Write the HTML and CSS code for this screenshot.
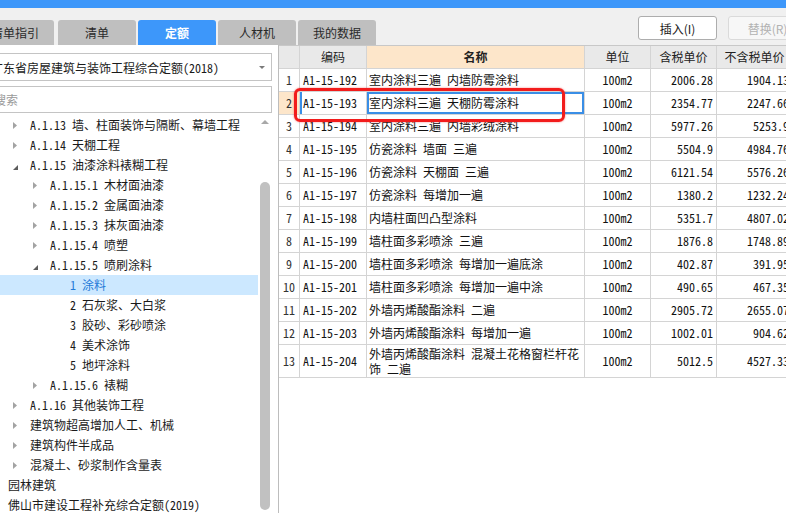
FILE: index.html
```html
<!DOCTYPE html>
<html lang="zh-CN">
<head>
<meta charset="utf-8">
<title>定额</title>
<link rel="stylesheet" href="styles.css">
</head>
<body>
<div class="topbar"></div>
<div class="toolbar">
  <div class="tabs">
    <div class="tab first">清单指引</div>
    <div class="tab">清单</div>
    <div class="tab active">定额</div>
    <div class="tab">人材机</div>
    <div class="tab">我的数据</div>
  </div>
  <div class="actions">
    <button class="btn">插入(I)</button>
    <button class="btn disabled">替换(R)</button>
  </div>
</div>
<div class="main">
  <aside class="side">
    <div class="select"><span>广东省房屋建筑与装饰工程综合定额(2018)</span><span class="caret"></span></div>
    <div class="search">搜索</div>
    <div class="treewrap">
      <ul class="tree">
        <li class="l1"><svg class="arr" width="4" height="7" viewBox="0 0 4 7"><path d="M0 0L4 3.5L0 7Z"/></svg>A.1.13 墙、柱面装饰与隔断、幕墙工程</li>
        <li class="l1"><svg class="arr" width="4" height="7" viewBox="0 0 4 7"><path d="M0 0L4 3.5L0 7Z"/></svg>A.1.14 天棚工程</li>
        <li class="l1"><svg class="arr open" width="5" height="5" viewBox="0 0 5 5"><path d="M5 0L5 5L0 5Z"/></svg>A.1.15 油漆涂料裱糊工程</li>
        <li class="l2"><svg class="arr" width="4" height="7" viewBox="0 0 4 7"><path d="M0 0L4 3.5L0 7Z"/></svg>A.1.15.1 木材面油漆</li>
        <li class="l2"><svg class="arr" width="4" height="7" viewBox="0 0 4 7"><path d="M0 0L4 3.5L0 7Z"/></svg>A.1.15.2 金属面油漆</li>
        <li class="l2"><svg class="arr" width="4" height="7" viewBox="0 0 4 7"><path d="M0 0L4 3.5L0 7Z"/></svg>A.1.15.3 抹灰面油漆</li>
        <li class="l2"><svg class="arr" width="4" height="7" viewBox="0 0 4 7"><path d="M0 0L4 3.5L0 7Z"/></svg>A.1.15.4 喷塑</li>
        <li class="l2"><svg class="arr open" width="5" height="5" viewBox="0 0 5 5"><path d="M5 0L5 5L0 5Z"/></svg>A.1.15.5 喷刷涂料</li>
        <li class="l3 sel">1 涂料</li>
        <li class="l3">2 石灰浆、大白浆</li>
        <li class="l3">3 胶砂、彩砂喷涂</li>
        <li class="l3">4 美术涂饰</li>
        <li class="l3">5 地坪涂料</li>
        <li class="l2"><svg class="arr" width="4" height="7" viewBox="0 0 4 7"><path d="M0 0L4 3.5L0 7Z"/></svg>A.1.15.6 裱糊</li>
        <li class="l1"><svg class="arr" width="4" height="7" viewBox="0 0 4 7"><path d="M0 0L4 3.5L0 7Z"/></svg>A.1.16 其他装饰工程</li>
        <li class="l1"><svg class="arr" width="4" height="7" viewBox="0 0 4 7"><path d="M0 0L4 3.5L0 7Z"/></svg>建筑物超高增加人工、机械</li>
        <li class="l1"><svg class="arr" width="4" height="7" viewBox="0 0 4 7"><path d="M0 0L4 3.5L0 7Z"/></svg>建筑构件半成品</li>
        <li class="l1"><svg class="arr" width="4" height="7" viewBox="0 0 4 7"><path d="M0 0L4 3.5L0 7Z"/></svg>混凝土、砂浆制作含量表</li>
        <li class="l0">园林建筑</li>
        <li class="l0">佛山市建设工程补充综合定额(2019)</li>
      </ul>
      <div class="vscroll"><span class="up"></span><span class="thumb"></span></div>
    </div>
  </aside>
  <section class="grid">
    <table class="dt">
      <colgroup><col class="c-no"><col class="c-code"><col class="c-name"><col class="c-unit"><col class="c-p1"><col class="c-p2"></colgroup>
      <thead>
        <tr><th></th><th>编码</th><th class="hl">名称</th><th>单位</th><th>含税单价</th><th>不含税单价</th></tr>
      </thead>
      <tbody>
        <tr><td class="no">1</td><td>A1-15-192</td><td class="name">室内涂料三遍 内墙防霉涂料</td><td class="unit">100m2</td><td class="num">2006.28</td><td class="num">1904.13</td></tr>
        <tr class="cur"><td class="no">2</td><td class="code-cur">A1-15-193</td><td class="name focus">室内涂料三遍 天棚防霉涂料</td><td class="unit">100m2</td><td class="num">2354.77</td><td class="num">2247.66</td></tr>
        <tr><td class="no">3</td><td>A1-15-194</td><td class="name">室内涂料三遍 内墙彩绒涂料</td><td class="unit">100m2</td><td class="num">5977.26</td><td class="num">5253.9</td></tr>
        <tr><td class="no">4</td><td>A1-15-195</td><td class="name">仿瓷涂料 墙面 三遍</td><td class="unit">100m2</td><td class="num">5504.9</td><td class="num">4984.76</td></tr>
        <tr><td class="no">5</td><td>A1-15-196</td><td class="name">仿瓷涂料 天棚面 三遍</td><td class="unit">100m2</td><td class="num">6121.54</td><td class="num">5576.26</td></tr>
        <tr><td class="no">6</td><td>A1-15-197</td><td class="name">仿瓷涂料 每增加一遍</td><td class="unit">100m2</td><td class="num">1380.2</td><td class="num">1232.24</td></tr>
        <tr><td class="no">7</td><td>A1-15-198</td><td class="name">内墙柱面凹凸型涂料</td><td class="unit">100m2</td><td class="num">5351.7</td><td class="num">4807.02</td></tr>
        <tr><td class="no">8</td><td>A1-15-199</td><td class="name">墙柱面多彩喷涂 三遍</td><td class="unit">100m2</td><td class="num">1876.8</td><td class="num">1748.89</td></tr>
        <tr><td class="no">9</td><td>A1-15-200</td><td class="name">墙柱面多彩喷涂 每增加一遍底涂</td><td class="unit">100m2</td><td class="num">402.87</td><td class="num">391.95</td></tr>
        <tr><td class="no">10</td><td>A1-15-201</td><td class="name">墙柱面多彩喷涂 每增加一遍中涂</td><td class="unit">100m2</td><td class="num">490.65</td><td class="num">467.35</td></tr>
        <tr><td class="no">11</td><td>A1-15-202</td><td class="name">外墙丙烯酸酯涂料 二遍</td><td class="unit">100m2</td><td class="num">2905.72</td><td class="num">2655.07</td></tr>
        <tr><td class="no">12</td><td>A1-15-203</td><td class="name">外墙丙烯酸酯涂料 每增加一遍</td><td class="unit">100m2</td><td class="num">1002.01</td><td class="num">904.62</td></tr>
        <tr class="tall"><td class="no">13</td><td>A1-15-204</td><td class="name wrap">外墙丙烯酸酯涂料 混凝土花格窗栏杆花饰 二遍</td><td class="unit">100m2</td><td class="num">5012.5</td><td class="num">4527.33</td></tr>
      </tbody>
    </table>
    <div class="redbox"></div>
  </section>
</div>
</body>
</html>
```

FILE: styles.css
```css
html, body {
  margin: 0;
  padding: 0;
}
body {
  width: 786px;
  height: 513px;
  overflow: hidden;
  background: #ffffff;
  font-family: "Noto Sans Mono CJK SC", "Noto Sans CJK SC", sans-serif;
  font-size: 12px;
  color: #1a1a1a;
}

.topbar {
  height: 8px;
  background: #3d97fa;
}

.toolbar {
  height: 37px;
  background: #f0f0f0;
  display: flex;
  justify-content: space-between;
}
.tabs {
  display: flex;
  align-items: flex-end;
  gap: 2px;
  margin-left: -24px;
}
.tab {
  width: 78px;
  height: 25px;
  background: #bfbfbf;
  border-radius: 3px 3px 0 0;
  display: flex;
  align-items: center;
  justify-content: center;
  font-family: "Noto Sans CJK SC", sans-serif;
  font-size: 12px;
  color: #2a2a2a;
}
.tab.first {
  margin-right: 2px;
}
.tab.active {
  background: #3d97fa;
  color: #ffffff;
  font-weight: bold;
}
.actions {
  display: flex;
  align-items: flex-start;
  gap: 11px;
  margin-top: 8px;
  margin-right: -21px;
}
.btn {
  width: 79px;
  height: 24px;
  box-sizing: border-box;
  background: #ffffff;
  border: 1px solid #adadad;
  border-radius: 3px;
  font-family: "Noto Sans CJK SC", sans-serif;
  font-size: 12px;
  color: #1a1a1a;
  padding: 0;
}
.btn.disabled {
  background: #f7f7f7;
  border-color: #dadada;
  color: #b2b2b2;
}

.main {
  display: flex;
  height: 468px;
}

.side {
  width: 278px;
  flex: none;
  border-right: 1px solid #bdbdbd;
  background: #ffffff;
  display: flex;
  flex-direction: column;
  overflow: hidden;
}
.select {
  margin: 8px 6px 0 -14px;
  height: 28px;
  box-sizing: border-box;
  border: 1px solid #c4c4c4;
  padding: 0 6px 0 4px;
  display: flex;
  align-items: center;
  justify-content: space-between;
  white-space: nowrap;
  color: #1a1a1a;
}
.caret {
  width: 0;
  height: 0;
  border-left: 3px solid transparent;
  border-right: 3px solid transparent;
  border-top: 3px solid #7a7a7a;
  margin-right: 0;
}
.search {
  margin: 5px 6px 0 -14px;
  height: 27px;
  box-sizing: border-box;
  border: 1px solid #c4c4c4;
  padding-left: 7px;
  display: flex;
  align-items: center;
  color: #9a9a9a;
}
.treewrap {
  margin-top: 2px;
  flex: 1;
  display: flex;
  overflow: hidden;
}
.tree {
  list-style: none;
  margin: 0;
  padding: 0;
  width: 258px;
  flex: none;
}
.tree li {
  height: 20px;
  line-height: 20px;
  display: flex;
  align-items: center;
  white-space: nowrap;
  color: #1a1a1a;
}
.tree .arr {
  flex: none;
  fill: #a3a3a3;
  margin-right: 13px;
}
.tree .arr.open {
  fill: #5c5c5c;
  margin-right: 12px;
  margin-top: 4px;
}
.tree .l0 { padding-left: 8px; }
.tree .l1 { padding-left: 13px; }
.tree .l2 { padding-left: 33px; }
.tree .l3 { padding-left: 70px; }
.tree .sel {
  background: #cce8ff;
  color: #1f7ad8;
}
.vscroll {
  width: 14px;
  flex: none;
  display: flex;
  flex-direction: column;
  align-items: center;
  padding: 5px 0 3px;
  box-sizing: border-box;
}
.vscroll .up {
  width: 0;
  height: 0;
  border-left: 4px solid transparent;
  border-right: 4px solid transparent;
  border-bottom: 4px solid #a8a8a8;
}
.vscroll .thumb {
  margin-top: 58px;
  width: 10px;
  flex: 1;
  background: #c1c1c1;
  border-radius: 5px;
}

.grid {
  flex: 1;
  position: relative;
  overflow: hidden;
  background: #ffffff;
  border-top: 1px solid #c8c8c8;
}
.dt {
  table-layout: fixed;
  border-collapse: separate;
  border-spacing: 0;
  width: 514px;
}
.c-no { width: 21px; }
.c-code { width: 67px; }
.c-name { width: 218px; }
.c-unit { width: 66px; }
.c-p1 { width: 66px; }
.c-p2 { width: 76px; }
.dt th, .dt td {
  box-sizing: border-box;
  height: 23px;
  padding: 0 3px;
  border-right: 1px solid #d4d4d4;
  border-bottom: 1px solid #d4d4d4;
  white-space: nowrap;
  overflow: hidden;
  font-size: 12px;
  line-height: 14px;
  color: #111111;
}
.dt th {
  background: #e9e9e9;
  font-family: "Noto Sans CJK SC", sans-serif;
  font-weight: normal;
  text-align: center;
  color: #222222;
}
.dt th.hl {
  background: #fde6ca;
  font-weight: bold;
}
.dt td.no {
  text-align: center;
  padding: 0;
  color: #333333;
}
.dt td.name {
  padding-left: 2px;
}
.dt td.unit {
  text-align: center;
}
.dt td.num {
  text-align: right;
}
.dt tr.cur td.no {
  background: #fde6ca;
}
.dt td.code-cur {
  box-shadow: inset 2px 0 0 #3a8ee6;
}
.dt td.focus {
  box-shadow: inset 0 0 0 2px #3a8ee6;
}
.dt tr.tall td {
  height: 33px;
}
.dt td.wrap {
  white-space: normal;
  line-height: 15px;
}

.redbox {
  position: absolute;
  left: 15px;
  top: 42px;
  width: 271px;
  height: 34px;
  box-sizing: border-box;
  border: 3px solid #f21c1c;
  border-radius: 6px;
  box-shadow: 0 0 2px rgba(240, 30, 30, 0.6);
}
```
